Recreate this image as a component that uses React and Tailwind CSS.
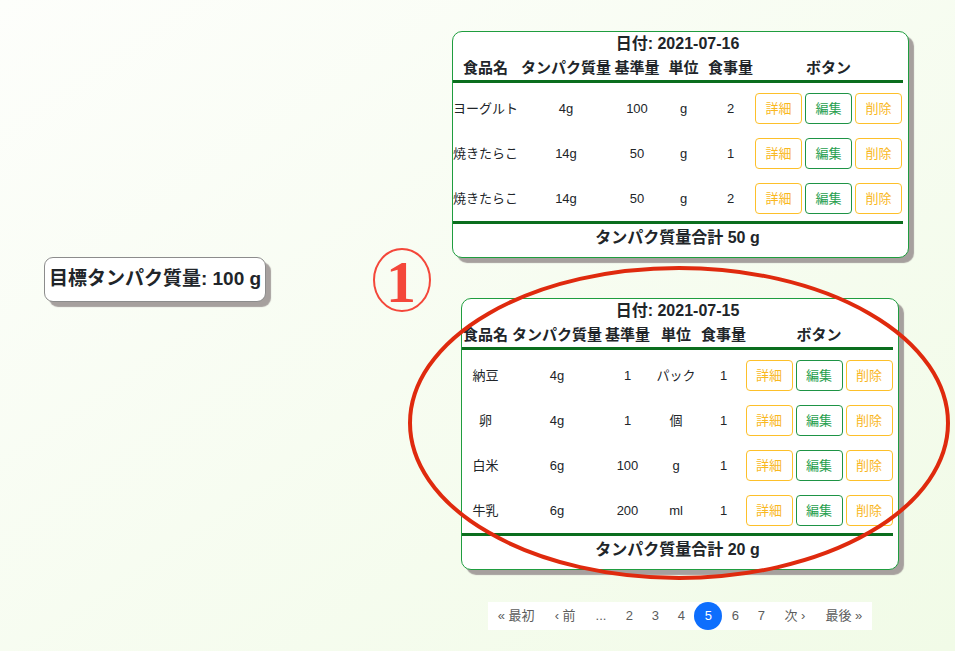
import React from 'react';

const days = [
    {
        date: '2021-07-16',
        cols: 'grid-cols-[66px_95px_47px_46px_48px_148px]',
        width: 'w-[450px]',
        total: 50,
        items: [
            { name: 'ヨーグルト', protein: '4g', base: 100, unit: 'g', qty: 2 },
            { name: '焼きたらこ', protein: '14g', base: 50, unit: 'g', qty: 1 },
            { name: '焼きたらこ', protein: '14g', base: 50, unit: 'g', qty: 2 },
        ],
    },
    {
        date: '2021-07-15',
        cols: 'grid-cols-[47px_96px_45px_52px_43px_148px]',
        width: 'w-[431px]',
        total: 20,
        items: [
            { name: '納豆', protein: '4g', base: 1, unit: 'パック', qty: 1 },
            { name: '卵', protein: '4g', base: 1, unit: '個', qty: 1 },
            { name: '白米', protein: '6g', base: 100, unit: 'g', qty: 1 },
            { name: '牛乳', protein: '6g', base: 200, unit: 'ml', qty: 1 },
        ],
    },
];

const headers = ['食品名', 'タンパク質量', '基準量', '単位', '食事量', 'ボタン'];

const DayCard = ({ day, className }) => (
    <div className={`rounded-[10px] border border-[#1f9d3f] bg-white pr-[5px] pb-[5px] shadow-[5px_5px_1px_#a6a09e] ${className}`}>
        <div className={day.width}>
            <div className="h-[24px] flex items-center justify-center text-[16px] font-bold">日付: {day.date}</div>
            <div className={`grid ${day.cols} h-[24px] items-center text-center text-[15px] font-bold whitespace-nowrap`}>
                {headers.map((h) => (
                    <div key={h} className="flex justify-center">{h}</div>
                ))}
            </div>
            <div className="h-[3px] bg-[#0b6e1e] mb-[3px]" />
            {day.items.map((f, i) => (
                <div key={i} className={`grid ${day.cols} h-[45px] items-center text-center text-[13px] whitespace-nowrap`}>
                    <div>{f.name}</div>
                    <div>{f.protein}</div>
                    <div>{f.base}</div>
                    <div>{f.unit}</div>
                    <div>{f.qty}</div>
                    <div className="flex justify-center gap-[3px]">
                        <button className="h-[31px] w-[47px] rounded-[4px] border border-[#fdc02a] text-[#f9b81f] text-[13px]">詳細</button>
                        <button className="h-[31px] w-[47px] rounded-[4px] border border-[#1e9445] text-[#27a04e] text-[13px]">編集</button>
                        <button className="h-[31px] w-[47px] rounded-[4px] border border-[#fdc02a] text-[#f9b81f] text-[13px]">削除</button>
                    </div>
                </div>
            ))}
            <div className="h-[3px] bg-[#0b6e1e]" />
            <div className="h-[28px] flex items-center justify-center text-[16px] font-bold">タンパク質量合計 {day.total} g</div>
        </div>
    </div>
);

const Pagination = () => (
    <div className="mt-[32px] flex h-[28px] items-center bg-white text-[13px] text-[#5c5c5c]">
        <span className="px-[10px]">« 最初</span>
        <span className="px-[10px]">‹ 前</span>
        <span className="px-[10px]">...</span>
        {[2, 3, 4].map((n) => (
            <span key={n} className="w-[26px] text-center">{n}</span>
        ))}
        <span className="flex h-[28px] w-[28px] items-center justify-center rounded-full bg-[#0d6efd] text-white">5</span>
        {[6, 7].map((n) => (
            <span key={n} className="w-[26px] text-center">{n}</span>
        ))}
        <span className="px-[10px]">次 ›</span>
        <span className="px-[10px]">最後 »</span>
    </div>
);

const App = () => {
    return (
        <div className="relative min-h-screen bg-linear-to-br from-[#fdfefb] to-[#f1fbe7] font-['Liberation_Sans','Noto_Sans_CJK_JP',sans-serif] text-[#212529]">
            <div className="flex">
                <div className="w-[405px] shrink-0">
                    <div className="ml-[44px] mt-[257px] flex h-[45px] w-[222px] items-center justify-center whitespace-nowrap rounded-[9px] border border-[#8c8c8c] bg-white text-[19px] font-bold shadow-[5px_5px_1px_#a6a09e]">
                        目標タンパク質量: 100 g
                    </div>
                </div>
                <div className="w-[550px] flex flex-col items-center pt-[31px] pb-[20px]">
                    <DayCard day={days[0]} />
                    <DayCard day={days[1]} className="mt-[40px]" />
                    <Pagination />
                </div>
            </div>

            {/* annotations drawn over the screenshot */}
            <svg className="pointer-events-none absolute left-0 top-0" width="955" height="651" viewBox="0 0 955 651">
                <ellipse cx="402" cy="280" rx="28" ry="31" fill="none" stroke="#f4473a" strokeWidth="2" />
                <text x="401" y="302" textAnchor="middle" fontFamily="Liberation Serif, serif" fontWeight="bold" fontSize="60" fill="#f4473a">1</text>
                <ellipse cx="679" cy="423" rx="269" ry="155" fill="none" stroke="#df2a0e" strokeWidth="4" />
            </svg>
        </div>
    );
};

export default App;
